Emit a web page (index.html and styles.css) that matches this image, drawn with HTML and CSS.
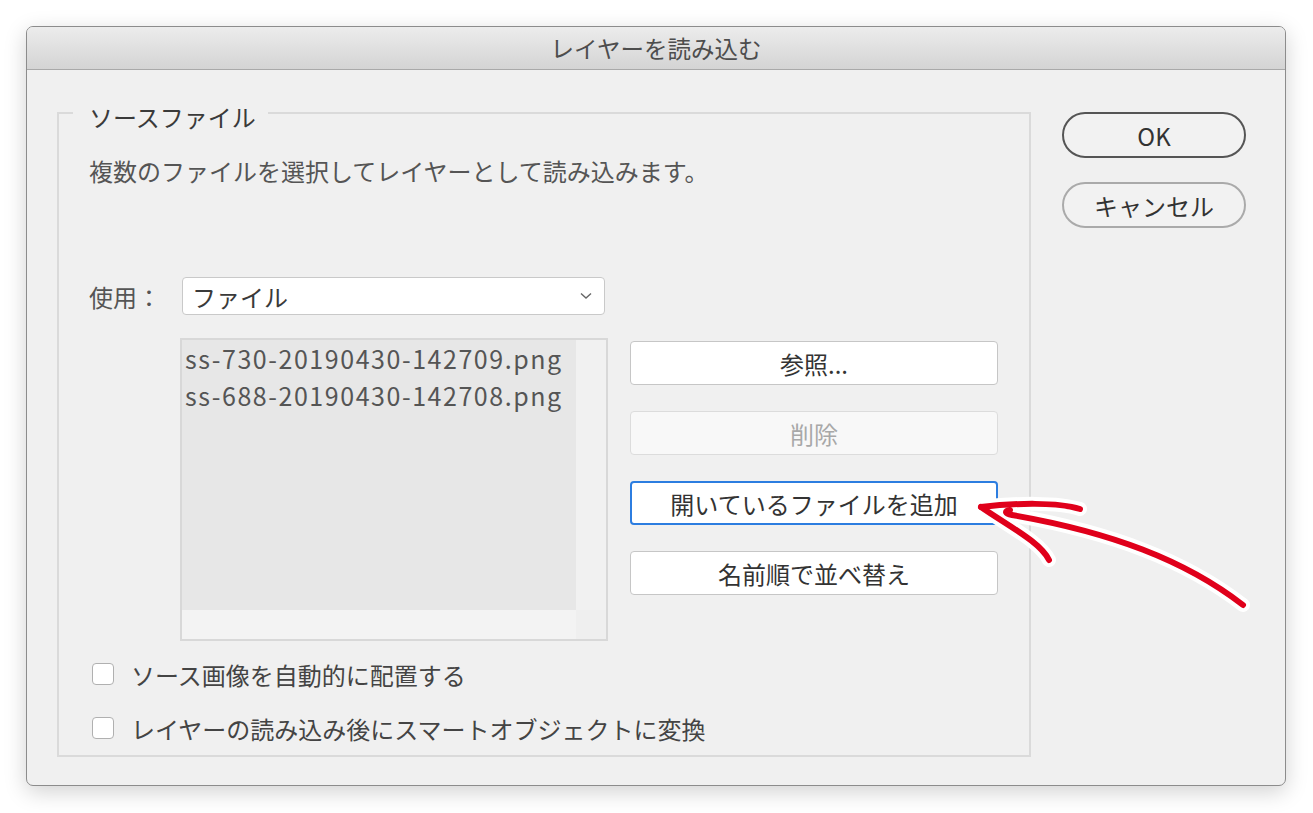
FILE: index.html
```html
<!DOCTYPE html>
<html lang="ja">
<head>
  <meta charset="UTF-8">
  <title>レイヤーを読み込む</title>
  <link rel="stylesheet" href="styles.css">
</head>
<body>
  <div class="window">
    <div class="titlebar">レイヤーを読み込む</div>

    <div class="content">
      <fieldset class="source">
        <legend>ソースファイル</legend>
        <div class="inner">
          <p class="desc">複数のファイルを選択してレイヤーとして読み込みます。</p>

          <div class="use-row">
            <span class="use-label">使用：</span>
            <div class="select">
              <span>ファイル</span>
              <svg class="chevron" width="12" height="8" viewBox="0 0 12 8">
                <path d="M1 1.5 L6 6 L11 1.5" fill="none" stroke="#666" stroke-width="1.4"/>
              </svg>
            </div>
          </div>

          <div class="files-row">
            <div class="file-list">
              <div class="items">
                <div>ss-730-20190430-142709.png</div>
                <div>ss-688-20190430-142708.png</div>
              </div>
              <div class="vscroll"></div>
              <div class="hscroll"></div>
              <div class="corner"></div>
            </div>

            <div class="file-buttons">
              <button class="btn">参照...</button>
              <button class="btn disabled">削除</button>
              <button class="btn focused">開いているファイルを追加</button>
              <button class="btn">名前順で並べ替え</button>
            </div>
          </div>

          <label class="check">
            <span class="box"></span>
            ソース画像を自動的に配置する
          </label>
          <label class="check second">
            <span class="box"></span>
            レイヤーの読み込み後にスマートオブジェクトに変換
          </label>
        </div>
      </fieldset>

      <div class="actions">
        <button class="pill primary">OK</button>
        <button class="pill">キャンセル</button>
      </div>
    </div>
  </div>

  <!-- hand drawn arrow annotation -->
  <svg class="arrow" width="1313" height="813" viewBox="0 0 1313 813">
    <g fill="none" stroke="#fff" stroke-width="14" stroke-linecap="round" stroke-linejoin="round">
      <path d="M1243 605 C1185 560 1110 532 1012 515 C1005 514 1004 511 1010 510"/>
      <path d="M981 507 C1015 503 1058 502 1080 509"/>
      <path d="M981 507 C1010 527 1040 542 1049 560"/>
    </g>
    <g fill="none" stroke="#e0001b" stroke-width="6" stroke-linecap="round" stroke-linejoin="round">
      <path d="M1243 605 C1185 560 1110 532 1012 515 C1005 514 1004 511 1010 510"/>
      <path d="M981 507 C1015 503 1058 502 1080 509"/>
      <path d="M981 507 C1010 527 1040 542 1049 560"/>
    </g>
  </svg>
</body>
</html>
```

FILE: styles.css
```css
body {
  margin: 0;
  padding: 26px;
  background-color: #fff;
  font-family: "Noto Sans CJK JP", "Noto Sans", sans-serif;
  color: #3a3a3a;
  position: relative;
}

.window {
  width: 1260px;
  height: 760px;
  box-sizing: border-box;
  border: 1px solid #8c8c8c;
  border-radius: 7px;
  background-color: #f0f0f0;
  box-shadow: 0 6px 22px rgba(0, 0, 0, 0.18);
  overflow: hidden;
}

.titlebar {
  height: 42px;
  line-height: 42px;
  border-bottom: 1px solid #a9a9a9;
  background: linear-gradient(#ececec, #d4d4d4);
  text-align: center;
  font-size: 23.5px;
  color: #4d4d4d;
}

.content {
  display: flex;
  align-items: flex-start;
  padding: 0 38px 0 30px;
}

/* Source file group */
.source {
  width: 974px;
  box-sizing: border-box;
  margin: 25px 0 0 0;
  padding: 0 0 11px 14px;
  border: 2px solid #dadada;
  min-width: 0;
}
.source legend {
  padding: 8px 12px 0 16px;
  font-size: 24px;
  line-height: 28px;
}
.inner {
  padding-left: 16px;
}

.desc {
  margin: 24px 0 0 0;
  font-size: 24px;
  line-height: 32px;
  color: #555;
}

.use-row {
  display: flex;
  align-items: center;
  margin-top: 90px;
}
.use-label {
  width: 93px;
  font-size: 24px;
  color: #555;
}
.select {
  width: 423px;
  height: 38px;
  box-sizing: border-box;
  background-color: #fff;
  border: 1px solid #c9c9c9;
  border-radius: 4px;
  display: flex;
  align-items: center;
  justify-content: space-between;
  padding: 0 12px 0 9px;
  font-size: 24px;
}

.files-row {
  display: flex;
  align-items: flex-start;
  margin-top: 23px;
}
.file-list {
  margin-left: 91px;
  width: 428px;
  height: 303px;
  box-sizing: border-box;
  border: 2px solid #d8d8d8;
  display: grid;
  grid-template-columns: 1fr 30px;
  grid-template-rows: 1fr 29px;
}
.items {
  background-color: #e7e7e7;
  padding: 0 0 0 3px;
  font-size: 25px;
  line-height: 37px;
  color: #555;
  letter-spacing: 1.55px;
  white-space: nowrap;
  overflow: hidden;
}
.vscroll {
  background-color: #f1f1f1;
}
.hscroll {
  background-color: #f3f3f3;
}
.corner {
  background-color: #efefef;
}

.file-buttons {
  display: flex;
  flex-direction: column;
  gap: 26px;
  margin: 3px 0 0 22px;
}
.btn {
  width: 368px;
  height: 44px;
  box-sizing: border-box;
  background-color: #fff;
  border: 1px solid #c6c6c6;
  border-radius: 4px;
  font-family: inherit;
  font-size: 24px;
  color: #333;
  padding: 0;
}
.btn.disabled {
  background-color: #f8f8f8;
  border-color: #dcdcdc;
  color: #a8a8a8;
}
.btn.focused {
  border: 2px solid #2c7de0;
}

.check {
  display: flex;
  align-items: center;
  height: 32px;
  margin-top: 17px;
  font-size: 24px;
  color: #444;
}
.check.second {
  margin-top: 22px;
}
.check .box {
  width: 22px;
  height: 22px;
  box-sizing: border-box;
  margin: 0 17px 0 3px;
  background-color: #fff;
  border: 1.5px solid #b0b0b0;
  border-radius: 4px;
}

/* OK / Cancel */
.actions {
  display: flex;
  flex-direction: column;
  gap: 24px;
  margin: 42px 0 0 31px;
}
.pill {
  width: 184px;
  height: 46px;
  box-sizing: border-box;
  border-radius: 23px;
  background-color: #f2f2f2;
  border: 2px solid #aaa;
  font-family: inherit;
  font-size: 24px;
  color: #333;
  padding: 0;
}
.pill.primary {
  border-color: #555;
}

.arrow {
  position: absolute;
  top: 0;
  left: 0;
  pointer-events: none;
}
```
